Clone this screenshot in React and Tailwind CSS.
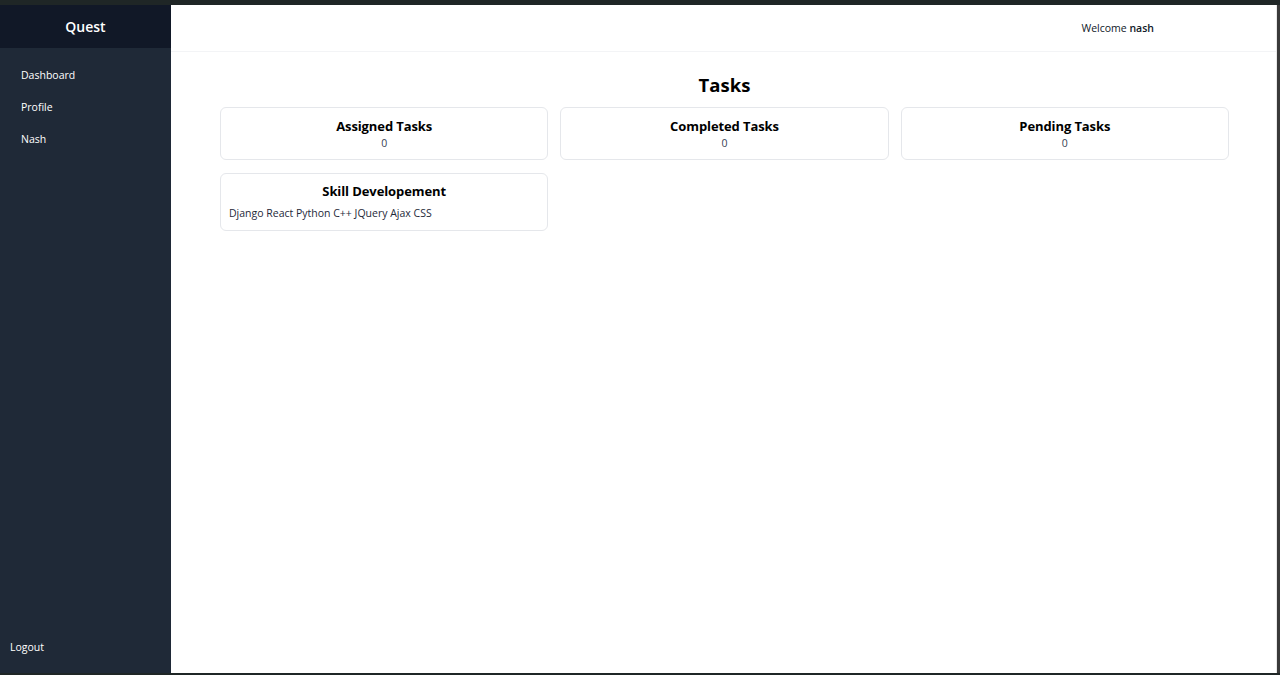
import React from 'react';

const navItems = ['Dashboard', 'Profile', 'Nash'];

const stats = [
  { title: 'Assigned Tasks', value: 0 },
  { title: 'Completed Tasks', value: 0 },
  { title: 'Pending Tasks', value: 0 },
];

const skills = ['Django', 'React', 'Python', 'C++', 'JQuery', 'Ajax', 'CSS'];

const StatCard = ({ title, value }) => (
  <div className="h-[53px] rounded-md border border-gray-200 bg-white flex flex-col items-center pt-[9px]">
    <div className="text-[13px] font-bold leading-[18px] tracking-[-0.1px] text-black">{title}</div>
    <div className="text-[10.5px] leading-[16px] text-gray-700">{value}</div>
  </div>
);

const App = () => {
  return (
    <div
      className="w-[1280px] h-[675px] bg-[#1f2626] pt-[5px] pb-[2px] flex overflow-hidden"
      style={{ fontFamily: '"Open Sans", "Noto Sans", sans-serif' }}
    >
      {/* Sidebar */}
      <aside className="w-[171px] shrink-0 bg-[#1f2937] flex flex-col">
        <div className="h-[43px] bg-[#111827] flex items-center justify-center">
          <span className="text-white text-[14px] font-semibold">Quest</span>
        </div>
        <nav className="flex flex-col gap-[14px] pt-[18px] pl-[21px]">
          {navItems.map((item) => (
            <a key={item} className="text-white text-[10.5px] leading-[18px] cursor-pointer">
              {item}
            </a>
          ))}
        </nav>
        <div className="mt-auto pl-[10px] pb-[16px]">
          <span className="text-white text-[10.5px] leading-[18px]">Logout</span>
        </div>
      </aside>

      {/* Main */}
      <main className="flex-1 bg-white flex flex-col">
        <header className="h-[47px] border-b border-gray-100 flex items-center justify-end pr-[122px] pt-[1px]">
          <span className="text-[10.5px] text-gray-900">
            Welcome <span className="font-semibold">nash</span>
          </span>
        </header>
        <section className="pl-[49px] pr-[47px] pt-[20px]">
          <h1 className="text-center text-[18.5px] font-bold leading-[26px] text-black">Tasks</h1>
          <div className="grid grid-cols-3 gap-[12px] mt-[9px]">
            {stats.map((s) => (
              <StatCard key={s.title} title={s.title} value={s.value} />
            ))}
          </div>
          <div className="grid grid-cols-3 gap-[12px] mt-[13px]">
            <div className="h-[58px] rounded-md border border-gray-200 bg-white pt-[8px] px-[8px]">
              <div className="text-center text-[13px] font-bold leading-[18px] tracking-[-0.1px] text-black">
                Skill Developement
              </div>
              <div className="mt-[5px] text-[10.5px] leading-[16px] text-gray-800">
                {skills.join(' ')}
              </div>
            </div>
          </div>
        </section>
      </main>

      {/* window edge */}
      <div className="w-[1px] bg-[#e8e8e8]" />
      <div className="w-[3px] bg-[#3a3a3a]" />
    </div>
  );
};

export default App;
